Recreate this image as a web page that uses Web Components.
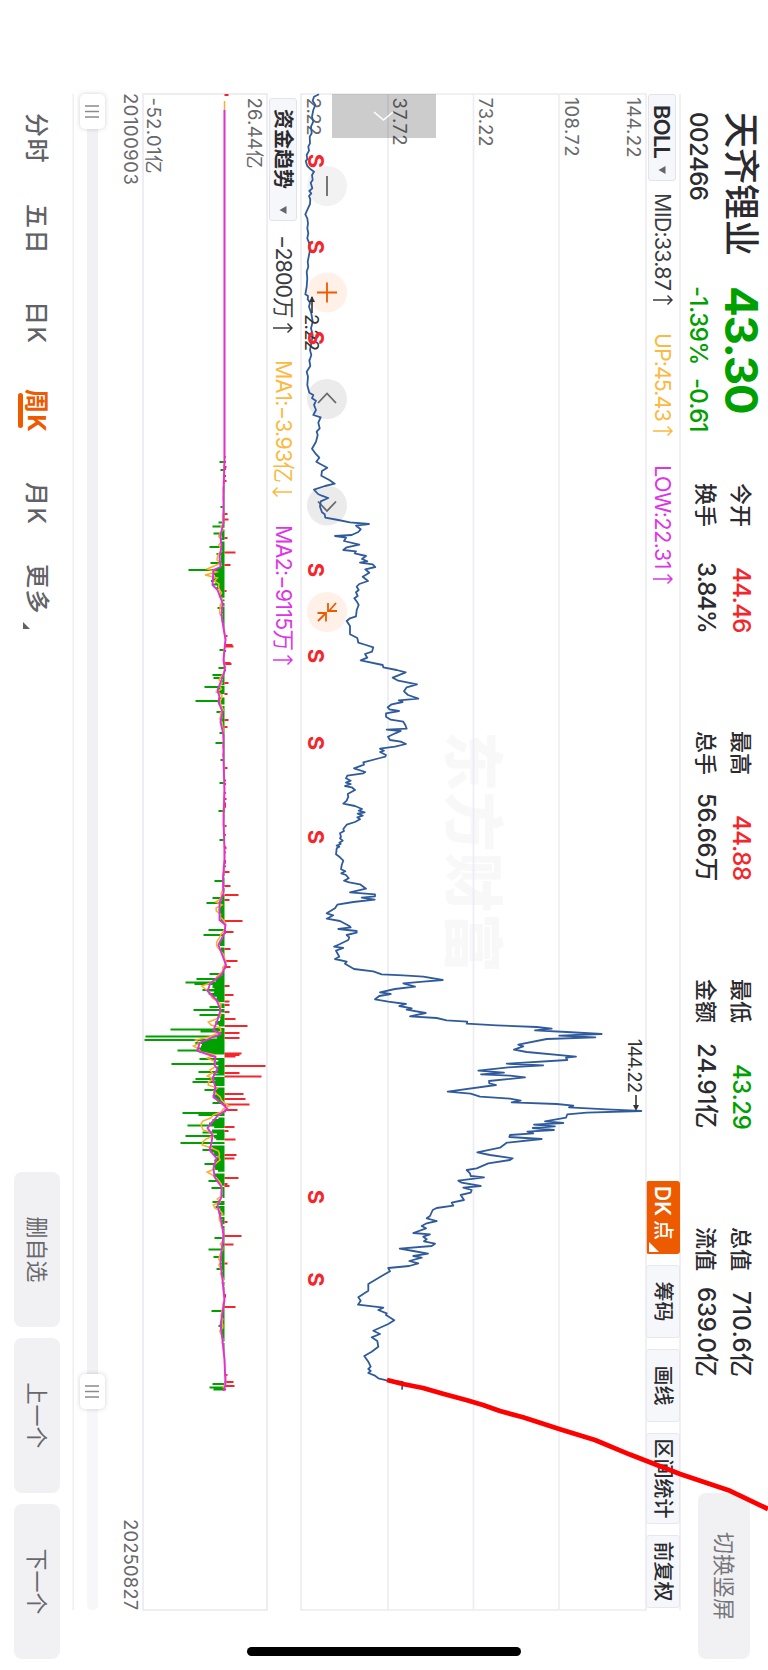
<!DOCTYPE html>
<html lang="zh-CN">
<head>
<meta charset="utf-8">
<title>天齐锂业 002466</title>
<style>
  html, body {
    margin: 0;
    width: 768px;
    height: 1670px;
    overflow: hidden;
    background: #fff;
  }
</style>
</head>
<body>
<stock-screen></stock-screen>

<script>
const BASE = 94;
const GREEN = '#00a000', RED = '#f4262b', ORANGE = '#ee5a00', BLUE = '#2f5b9c';

// price trace, in thirds of a pixel: [level offset, time offset, "level,time ..."]
const PRICE = [
  [250, 80, `207,43 192,50 188,62 196,75 190,90 186,110 190,125 183,140 185,160 179,170 180,190 175,200 177,212 170,225 172,238
  167,243 172,258 180,266 192,275 186,285 188,300 182,308 187,325 178,333 184,340 177,348 181,358 180,372 174,385 166,403
  172,415 174,430 172,445 175,460 172,475 178,490 180,510 176,530 173,545 175,560 170,575 172,595 170,620 166,643 174,648
  173,658 180,668 177,680 184,700 188,725 183,745 188,765 184,790 180,810 184,825 179,840`],
  [250, 360, `178,0 181,18 170,35 174,50 172,75 178,98 190,105 186,115 198,122 192,135 198,150 190,165 212,172 205,188 209,205
  200,215 203,225 198,245 186,266 196,280 208,293 199,305 212,313 232,323 216,333 214,347 238,360 254,371 225,378 192,389
  204,402 215,407 235,414 212,424 210,440 216,457 224,463 226,473 265,480 300,487 357,492 318,497 332,508 325,516 305,525
  255,528 288,533 282,543 328,554 290,562 280,570 318,574 314,580 348,588 336,597 352,604 330,608 368,613 376,621 346,628
  358,638 338,650 354,663 328,672 320,680 326,690 318,697 323,708 313,715 322,727 326,735 320,750 318,769 300,775 290,783
  300,798 300,823 322,834 325,848 348,855 370,862 366,875 345,882 352,893 332,901 398,915 400,922 440,930 467,937`],
  [280, 660, `338,53 355,62 411,73 380,82 372,94 384,105 415,116 356,121 368,126 335,133 323,142 328,148 357,153 318,160 318,170
  332,179 370,185 376,195 380,206 320,209 362,213 346,220 324,230 330,240 362,245 378,252 345,260 300,266 312,272 300,276
  318,285 316,290 300,294 250,307 252,314 222,325 256,336 250,340 202,347 198,355 212,362 198,368 212,372 195,378 215,382
  225,390 203,402 205,410 200,422 190,431 225,438 246,447 236,452 254,457 233,461 248,467 232,472 240,478 225,486 200,494
  190,507 192,513 180,520 183,530 180,535 188,542 178,548 182,552 170,557 178,560 170,565 168,583 180,592 190,602 185,615
  183,628 196,634 184,640 198,645 206,655 192,662 208,667 240,673 258,686 210,697 285,703 285,709 245,713 284,719 220,726
  172,734 165,745 140,760 160,766 140,776 180,783 208,798 212,802 175,807 230,813 230,818 200,825 208,832 205,840 180,852
  162,860 190,864 168,872 178,890 165,897 200,905 195,911 222,927 280,934`],
  [280, 960, `305,43 370,46 430,50 488,60 430,65 370,70 405,80 345,87 300,97 332,102 298,108 285,118 325,125 378,132 358,138
  395,145 380,149 437,159 390,169 470,174 500,181 562,185 560,191 650,196 770,201 815,206 765,211 860,216 965,222 838,227
  946,232 800,237 715,254 730,259 702,269 740,276 888,290 858,293 862,300 680,311 790,316 685,322 595,332 672,338 603,343
  690,347 735,352 627,363 628,370 648,375 503,395 572,401 600,410 690,416 722,422 695,427 830,432 880,437 867,442 980,448
  1084,453 920,458 862,463 858,473 795,484 850,489 762,494 825,499 758,504 822,510 742,515 760,520 690,525 688,531 785,537
  680,548 660,563 592,577 630,585 698,595 690,600 625,610 590,625 560,630 570,640 572,648 612,652 535,662 545,668 602,678
  550,683 575,690`],
  [280, 1180, `572,38 542,45 552,60 515,68 520,77 470,84 458,90 450,108 440,115 470,123 440,130 425,138 438,145 400,159 450,163
  430,170 440,178 432,184 465,191 455,198 359,206 400,213 444,221 400,228 425,233 388,243 415,250 388,258 325,264 330,274
  305,288 265,312 265,332 235,352 242,362 234,374 310,383 295,390 320,400 318,405 343,421 325,432 280,452 300,462 275,472
  292,483 295,500 275,515 253,528 265,545 272,560 265,567 272,573 265,579 285,587 295,595 320,601 368,606 366,629`]
];

const pairs = s => s.trim().split(/\s+/).map(p => p.split(/[,:]/).map(Number));

// weekly capital flow: smoothed line and the bars that stick out of it
const MA2 = pairs(`94:0 460:0 493:-1 523:-1 535:-4 547:-3 557:-5 567:-4 570:-11 585:-12 590:-7 603:-2 615:-3 628:-1 640:1 650:0
  660:-1 670:.5 680:-3 690:-7 697:-5 702:-6 712:-2 722:-4 735:-1 760:-1 790:0 820:-1 850:0 860:0 880:-1.5 893:-1 903:-5 920:-5
  925:1 933:0 945:-6 965:1.5 975:-3 983:-14 991:-17 1000:-8 1010:-4 1020:-7 1030:-11 1034:-4 1043:-25 1051:-27 1057:-9
  1065:-10 1069:-7 1078:-12 1087:-9 1097:-11 1105:-1 1109:3 1116:-7 1128:-17 1135:-12 1143:-13 1150:-15 1158:-8 1168:-11
  1177:-10 1187:-3 1197:-3 1205:-7 1222:-3 1235:-1 1252:-3 1263:-4 1280:-2 1300:0 1313:-2 1325:-4 1340:-2 1360:0 1385:1 1391:-1`);
const SPIKES = pairs(`95:4 462:-5 467:2 470:-4 481:2 507:-4 514:3 519.5:4 522.5:-6 526.5:-12 533.5:-11 538:3 547:-15 552.5:11 554:-8
  563:-14 565:6 570:-36 591:2 608:-7 636:3 645:8 646.5:9 650:-5 663:6 664:7 668:-6 675:-12 678:-11 683:4 687:-20 694:3 701:-29
  712:-8 720:4 727:3 733:-5 743:-9 760:-4 768:3 783:-5 799:2 811:-6 826:2 840:-5 848:2 872:5 881:-10 886:6 895:14 898:-12
  900:5 903:-18 921:18 930:-16 932:9 935:-21 949:6 961:13 967:6 974:-15 979:-28 982.5:-39 984:-30 986:5 990:-22 995:9
  1001.5:5 1005:5 1007:-15 1010:-31 1012:5 1015:-25 1019:11 1026:23 1029.5:-54 1031.5:-24 1033:15 1036.5:-79 1038:15 1040:-80
  1050.5:-47 1053.5:17 1055:15 1056.5:11 1059:-25 1064:-53 1066:41 1072:-26 1073:15 1076.5:37 1079:-29 1082:-32 1090:-20
  1094:19 1099:21 1103:-12 1104.5:25 1110:13 1113:-42 1115:-26 1125.5:-37 1127:10 1131:4 1132.5:-22 1136:-39 1139.5:11
  1143:-44 1150:-22 1155:12 1158.5:10 1164:-20 1178:14 1181:-16 1184:3 1186:5 1188:-13 1202:-12 1207:-9 1222:3 1238:-10
  1236:17 1244.5:9 1249.5:-16 1257:-11 1263.5:3 1269:-8 1307:11 1311:-13 1326:-6 1375:3 1382:9 1384:-12 1386:10 1387.5:-15 1389.5:-11`);

function ma2(x) {
  for (let i = 1; i < MA2.length; i++) {
    const [x0, v0] = MA2[i - 1], [x1, v1] = MA2[i];
    if (x <= x1) return v0 + (v1 - v0) * (x - x0) / (x1 - x0);
  }
  return -1;
}

class StockScreen extends HTMLElement {
  constructor() {
    super();
    this.attachShadow({ mode: 'open' }).innerHTML = `
      <style>
        :host {
          display: block;
          width: 768px;
          height: 1670px;
          overflow: hidden;
        }
        /* the app is held sideways */
        .app {
          display: flex;
          flex-direction: column;
          position: relative;
          width: 1670px;
          height: 768px;
          overflow: hidden;
          transform-origin: 0 0;
          transform: translateX(768px) rotate(90deg);
          font: 22px/1 Inter, "Noto Sans CJK SC", sans-serif;
          color: #2b2b2f;
        }
        .home {
          position: absolute;
          left: 1647px;
          top: 247px;
          width: 9px;
          height: 274px;
          border-radius: 5px;
          background: #000;
        }
        .mark {
          position: absolute;
          left: 0;
          top: 0;
          fill: none;
          stroke: #fd0000;
          stroke-width: 4.8;
          stroke-linejoin: round;
        }
      </style>
      <div class="app">
        <quote-header></quote-header>
        <indicator-bar kind="main">
          <drop-button w="87"><fit-text w="53" slot="label">BOLL</fit-text></drop-button>
          <indicator-value w="140" color="#3c3c40" dir="up"><fit-text w="97">MID:33.87</fit-text></indicator-value>
          <indicator-value w="132" color="#fdb840" dir="up"><fit-text w="88">UP:45.43</fit-text></indicator-value>
          <indicator-value w="132" color="#dd35e5" dir="up"><fit-text w="104">LOW:22.31</fit-text></indicator-value>
          <chart-tools slot="tools"></chart-tools>
        </indicator-bar>
        <price-chart></price-chart>
        <indicator-bar kind="sub">
          <drop-button w="123"><fit-text w="80" slot="label">资金趋势</fit-text></drop-button>
          <indicator-value w="125" color="#3c3c40" dir="up"><fit-text w="83">−2800万</fit-text></indicator-value>
          <indicator-value w="165" color="#fdb840" dir="down"><fit-text w="122">MA1:−3.93亿</fit-text></indicator-value>
          <indicator-value w="160" color="#dd35e5" dir="up"><fit-text w="125">MA2:−9115万</fit-text></indicator-value>
        </indicator-bar>
        <flow-chart></flow-chart>
        <date-axis></date-axis>
        <range-slider></range-slider>
        <bottom-nav></bottom-nav>
        <div class="home"></div>
        <svg class="mark" width="1670" height="768">
          <path d="M1380 381 1384 365 1388 345 1393.7 325 1400.3 301 1405 285 1411 268 1417.3 245 1429.3 208 1440 173 1454.6 138 1474 88 1490.8 38 1509 0"/>
        </svg>
      </div>
    `;
  }
}

class QuoteHeader extends HTMLElement {
  constructor() {
    super();
    const stats = [
      ['今开', '44.46', 65, RED, '换手', '3.84%', 70],
      ['最高', '44.88', 65, RED, '总手', '56.66万', 87],
      ['最低', '43.29', 64, GREEN, '金额', '24.91亿', 85],
      ['总值', '710.6亿', 85, '', '流值', '639.0亿', 89]
    ];
    this.attachShadow({ mode: 'open' }).innerHTML = `
      <style>
        :host {
          display: flex;
          height: 87px;
          padding-left: 112px;
          box-sizing: border-box;
          font-weight: 500;
        }
        .col { padding-top: 3px; }
        .col > div { display: flex; align-items: center; }
        .big { height: 48px; }
        .small { height: 37px; font-size: 24px; gap: 13px; }
        .id { width: 174px; }
        .id .big { font-size: 36px; }
        .price { width: 197px; color: ${GREEN}; }
        .price .big { height: 47px; padding-bottom: 1px; font-size: 45.5px; font-weight: 700; }
        .stats { display: grid; grid-template-columns: repeat(4, 248px); }
        .stat { width: 150px; padding-top: 9px; }
        .stat div { display: flex; height: 35px; align-items: center; justify-content: space-between; }
        .stat b { font-weight: 500; font-size: 24px; }
        .switch {
          display: flex;
          align-items: center;
          justify-content: center;
          width: 166px;
          height: 52px;
          margin: 18px 0 0 18px;
          border-radius: 8px;
          background: #f1f1f4;
          color: #77777b;
          font-weight: 400;
        }
      </style>
      <div class="col id">
        <div class="big"><fit-text w="144">天齐锂业</fit-text></div>
        <div class="small"><fit-text w="88">002466</fit-text></div>
      </div>
      <div class="col price">
        <div class="big"><fit-text w="127">43.30</fit-text></div>
        <div class="small"><fit-text w="79">-1.39%</fit-text><fit-text w="54">-0.61</fit-text></div>
      </div>
      <div class="stats">
        ${stats.map(([a, v, w, c, b, v2, w2]) => `
          <div class="stat">
            <div><span>${a}</span><b style="color:${c}"><fit-text w="${w + 1}">${v}</fit-text></b></div>
            <div><span>${b}</span><b><fit-text w="${w2 + 1}">${v2}</fit-text></b></div>
          </div>`).join('')}
      </div>
      <div class="switch">切换竖屏</div>
    `;
  }
}

class IndicatorBar extends HTMLElement {
  constructor() {
    super();
    this.attachShadow({ mode: 'open' }).innerHTML = `
      <style>
        :host {
          display: flex;
          align-items: center;
          box-sizing: border-box;
          width: 1516px;
          height: 35px;
          margin-left: ${BASE}px;
          border-top: 2px solid #f1f1f4;
        }
        :host([kind=sub]) { height: 34px; padding: 2px 0 0 4px; border-top: 0; }
        .tools { margin-left: auto; }
      </style>
      <slot></slot>
      <div class="tools"><slot name="tools"></slot></div>
    `;
  }
}

class DropButton extends HTMLElement {
  constructor() {
    super();
    this.attachShadow({ mode: 'open' }).innerHTML = `
      <style>
        :host {
          display: flex;
          align-items: center;
          justify-content: space-between;
          box-sizing: border-box;
          width: ${this.getAttribute('w')}px;
          height: 28px;
          padding: 0 6px 0 10px;
          margin-right: 12px;
          border: 1px solid #e2e4ec;
          border-radius: 3px;
          background: #f6f7fa;
          font-weight: 600;
        }
        ::slotted(fit-text) { font-size: ${this.getAttribute('w') > 100 ? 20 : 22}px; }
        :host([w="123"]) { margin-right: 14px; }
      </style>
      <slot name="label"></slot>
      <svg width="8" height="8"><path d="M0 .5h8L4 7.5z" fill="#66666a"/></svg>
    `;
  }
}

class IndicatorValue extends HTMLElement {
  constructor() {
    super();
    const head = this.getAttribute('dir') === 'up' ? 'M1.5 5.5 6 1l4.5 4.5' : 'M1.5 15.500 6 20l4.500-4.500';
    this.attachShadow({ mode: 'open' }).innerHTML = `
      <style>
        :host {
          display: flex;
          align-items: center;
          gap: 4px;
          width: ${this.getAttribute('w')}px;
          color: ${this.getAttribute('color')};
          font-size: 21.5px;
          font-weight: 400;
        }
        svg { fill: none; stroke: currentColor; stroke-width: 1.5; }
      </style>
      <slot></slot>
      <svg width="12" height="21"><path d="M6 1v19${head}"/></svg>
    `;
  }
}

class ChartTools extends HTMLElement {
  constructor() {
    super();
    this.attachShadow({ mode: 'open' }).innerHTML = `
      <style>
        :host { display: flex; gap: 11px; padding-right: 2px; font-size: 20px; font-weight: 500; }
        div {
          display: flex;
          align-items: center;
          justify-content: center;
          box-sizing: border-box;
          width: 73px;
          height: 34px;
          margin-top: -1px;
          border: 1px solid #e6e8ee;
          border-radius: 3px;
          background: #f6f7fa;
        }
        .dk {
          justify-content: flex-start;
          gap: 4px;
          padding-left: 5px;
          border: 0;
          background: ${ORANGE};
          color: #fff;
        }
        .dk span { font-size: 21px; font-weight: 600; }
        .dk svg { flex: none; align-self: flex-end; margin: 0 0 3px -2px; }
        .wide { width: 91px; }
      </style>
      <div class="dk"><span>DK</span>点<svg width="10" height="10"><path d="M10 0v10H0z" fill="#fff"/></svg></div>
      <div>筹码</div>
      <div>画线</div>
      <div class="wide">区间统计</div>
      <div>前复权</div>
    `;
  }
}

class PriceChart extends HTMLElement {
  constructor() {
    super();
    // levels run from 301 (bottom edge) to 646 (top edge)
    const line = PRICE.map(([l, t, s]) =>
      pairs(s).map(([a, b]) => `${(t + b / 3 - BASE).toFixed(1)},${(646 - l - a / 3).toFixed(1)}`).join(' ')).join(' ');
    const axis = [['144.22', 19, 59], ['108.72', 81, 58], ['73.22', 167, 48], ['37.72', 253, 47], ['2.22', 339, 37]];
    const sell = [161, 247, 338, 570, 656, 743, 837, 1197, 1279.5];
    const keys = [
      [186, 'g', 'M-10 0H10'],
      [292.5, 'o', 'M-10 0H10M0-10V10'],
      [399, 'd', 'M4-9-5.500 0 4 9'],
      [505.5, 'd', 'M-4-9 5.500 0-4 9'],
      [612, 'o', 'M-9-9-1-2M-9-1h8v-9M9 9 1 1M1 9.500V1H9.500']
    ];
    this.attachShadow({ mode: 'open' }).innerHTML = `
      <style>
        :host { display: block; height: 345px; margin-left: ${BASE}px; }
        svg { display: block; overflow: visible; }
        .grid { stroke: #ececf2; stroke-width: 1.6; fill: none; }
        .axis { font-size: 18.5px; fill: #68686c; }
        .peak { font-size: 18.5px; fill: #333; }
        .sell { font-size: 22px; font-weight: 700; fill: ${RED}; text-anchor: middle; }
        .water { font-size: 60px; font-weight: 900; fill: #f8f8f8; }
        .line { fill: none; stroke: ${BLUE}; stroke-width: 1.8; stroke-linejoin: round; }
        .g circle { fill: #f2f2f2; } .d circle { fill: #ebebeb; } .o circle { fill: #fff0e8; }
        .key path { fill: none; stroke: #68686c; stroke-width: 1.8; }
        .key.o path { stroke: ${ORANGE}; }
      </style>
      <svg width="1516" height="345">
        <text class="water" x="637" y="195" textLength="242">东方财富</text>
        <path class="grid" d="M0 345V0H1516V345ZM0 87H1516M0 172.500H1516M0 258H1516"/>
        ${axis.map(([t, y, w]) => `<text class="axis" x="3.5" y="${y}" textLength="${w + 1}">${t}</text>`).join('')}
        ${keys.map(([x, c, d]) => `<g class="key ${c}" transform="translate(${x - BASE} 319)"><circle r="20"/><path d="${d}"/></g>`).join('')}
        <polyline class="line" points="${line}"/>
        <text class="peak" x="220" y="341" textLength="37">2.22</text>
        <path d="M203 334h16" stroke="#333" stroke-width="1.600"/><path d="M202 334l6-3v6z" fill="#333"/>
        <text class="peak" x="945" y="18" textLength="54">144.22</text>
        <path d="M1001 10h14" stroke="#333" stroke-width="1.600"/><path d="M1017 10l-6-3v6z" fill="#333"/>
        ${sell.map(x => `<text class="sell" x="${x - BASE}" y="338.200">S</text>`).join('')}
        <path d="M0 210H44V314H0Z" fill="#000" fill-opacity=".2"/>
        <path d="M18 253l8 9.500-8 9.500" fill="none" stroke="#fff" stroke-width="1.600"/>
      </svg>
    `;
  }
}

class FlowChart extends HTMLElement {
  constructor() {
    super();
    const zero = 42.5;
    let green = '', red = '', ma1 = '';
    let seed = 7;
    const rnd = () => (seed = (seed * 16807) % 2147483647) / 2147483647;
    for (let x = 455; x < 1391; x += 1.75) {
      const v = ma2(x), r = rnd();
      if (v < -.6 && r > .12) green += `M${(x - BASE).toFixed(1)} ${zero}v${(-v * (.5 + r * .7)).toFixed(1)}`;
      else if (r > .7) red += `M${(x - BASE).toFixed(1)} ${zero}v-1.5`;
    }
    SPIKES.forEach(([x, v]) => {
      const d = `M${x - BASE} ${zero}v${-v}`;
      if (v < 0) green += d; else red += d;
    });
    for (let x = 101; x < 1391; x += 3) {
      const v = ma2(x + 3);
      ma1 += `${x - BASE},${(zero - v * 1.1 - (rnd() - .5) * Math.min(14, Math.abs(v) * 1.4)).toFixed(1)} `;
    }
    this.attachShadow({ mode: 'open' }).innerHTML = `
      <style>
        :host { display: block; height: 124px; margin-left: ${BASE}px; }
        svg { display: block; overflow: visible; fill: none; }
        text { font-size: 18.5px; fill: #68686c; }
      </style>
      <svg width="1516" height="124">
        <path d="M0 0H1516V124H0Z" stroke="#e8e8ef" stroke-width="1.500"/>
        <path d="${green}" stroke="${GREEN}" stroke-width="1.850"/>
        <path d="${red}" stroke="${RED}" stroke-width="1.850"/>
        <polyline points="${ma1}" stroke="#fbae2c" stroke-width="1.500"/>
        <polyline points="${MA2.map(([x, v]) => `${Math.max(x, 110) - BASE},${zero - v}`).join(' ')}" stroke="#e030dc" stroke-width="1.900"/>
        <text x="3.500" y="19" textLength="71">26.44亿</text>
        <text x="3.500" y="120" textLength="76">-52.01亿</text>
      </svg>
    `;
  }
}

class DateAxis extends HTMLElement {
  constructor() {
    super();
    this.attachShadow({ mode: 'open' }).innerHTML = `
      <style>
        :host {
          display: flex;
          box-sizing: border-box;
          justify-content: space-between;
          width: 1517px;
          height: 35px;
          margin-left: 93px;
          padding-top: 2px;
          font-size: 18.5px;
          line-height: 20px;
          color: #68686c;
        }
      </style>
      <fit-text w="92">20100903</fit-text>
      <fit-text w="91">20250827</fit-text>
    `;
  }
}

class RangeSlider extends HTMLElement {
  constructor() {
    super();
    const grip = '<svg width="13" height="14"><path d="M1 0v14M6.500 0v14M12 0v14" stroke="#8a8a8e" stroke-width="1.600"/></svg>';
    this.attachShadow({ mode: 'open' }).innerHTML = `
      <style>
        :host {
          display: flex;
          align-items: center;
          width: 1516px;
          height: 31px;
          margin-left: ${BASE}px;
          padding-bottom: 3px;
        }
        i {
          display: flex;
          align-items: center;
          justify-content: center;
          flex: none;
          width: 35px;
          height: 25px;
          border-radius: 5px;
          background: #fff;
          box-shadow: 0 0 5px rgba(0, 0, 0, .18);
          z-index: 1;
        }
        .on, .off { height: 11px; background: #f1f1f4; }
        .on { width: 1245px; }
        .off { flex: 1; background: #f7f7fa; border-radius: 0 6px 6px 0; }
      </style>
      <i>${grip}</i><div class="on"></div><i>${grip}</i><div class="off"></div>
    `;
  }
}

class BottomNav extends HTMLElement {
  constructor() {
    super();
    const tabs = [['分时', 91], ['五日', 97], ['日K', 88], ['周K', 93], ['月K', 82], ['更多', 66]];
    this.attachShadow({ mode: 'open' }).innerHTML = `
      <style>
        :host {
          display: flex;
          box-sizing: border-box;
          width: 1565px;
          height: 74px;
          margin-left: ${BASE}px;
          padding: 14px 0 0 19px;
          background: linear-gradient(#efeff2, #efeff2) 0 0 / 1516px 1.5px no-repeat;
        }
        .tab { height: 46px; font-size: 24px; line-height: 47px; font-weight: 500; color: #626266; white-space: nowrap; }
        .tab b { font-weight: inherit; letter-spacing: 1.5px; }
        .on { color: ${ORANGE}; font-weight: 700; }
        .on::after { content: ""; display: block; width: 35px; height: 5px; margin: -10px 0 0 4px; border-radius: 3px; background: ${ORANGE}; }
        .more { display: flex; align-items: flex-end; gap: 7px; }
        .more svg { flex: none; margin-bottom: 9px; }
        .keys { display: flex; gap: 11px; margin-left: auto; }
        .keys div {
          width: 155px;
          height: 46px;
          border-radius: 8px;
          background: #f1f1f4;
          color: #68686c;
          line-height: 46px;
          text-align: center;
        }
      </style>
      ${tabs.map(([t, w], i) => `<div class="tab ${i === 3 ? 'on' : ''} ${i === 5 ? 'more' : ''}" style="width:${w}px"><b>${t}</b>${
        i === 5 ? '<svg width="7" height="7"><path d="M7 0v7H0z" fill="#626266"/></svg>' : ''}</div>`).join('')}
      <div class="keys"><div>删自选</div><div>上一个</div><div>下一个</div></div>
    `;
  }
}

// spreads its text over a set width
class FitText extends HTMLElement {
  constructor() {
    super();
    this.attachShadow({ mode: 'open' }).innerHTML = `
      <style>
        :host { display: inline-block; flex: none; white-space: nowrap; }
      </style>
      <span><slot></slot></span>
    `;
  }
  connectedCallback() {
    const span = this.shadowRoot.querySelector('span');
    const w = Number(this.getAttribute('w'));
    const n = this.textContent.length;
    span.style.letterSpacing = (w - span.offsetWidth) / n + 'px';
    this.style.width = w + 'px';
  }
}

customElements.define('quote-header', QuoteHeader);
customElements.define('indicator-bar', IndicatorBar);
customElements.define('price-chart', PriceChart);
customElements.define('flow-chart', FlowChart);
customElements.define('chart-tools', ChartTools);
customElements.define('date-axis', DateAxis);
customElements.define('range-slider', RangeSlider);
customElements.define('bottom-nav', BottomNav);
customElements.define('stock-screen', StockScreen);
// these read their attributes, so they upgrade once the markup is in place
customElements.define('drop-button', DropButton);
customElements.define('indicator-value', IndicatorValue);
customElements.define('fit-text', FitText);
</script>
</body>
</html>
